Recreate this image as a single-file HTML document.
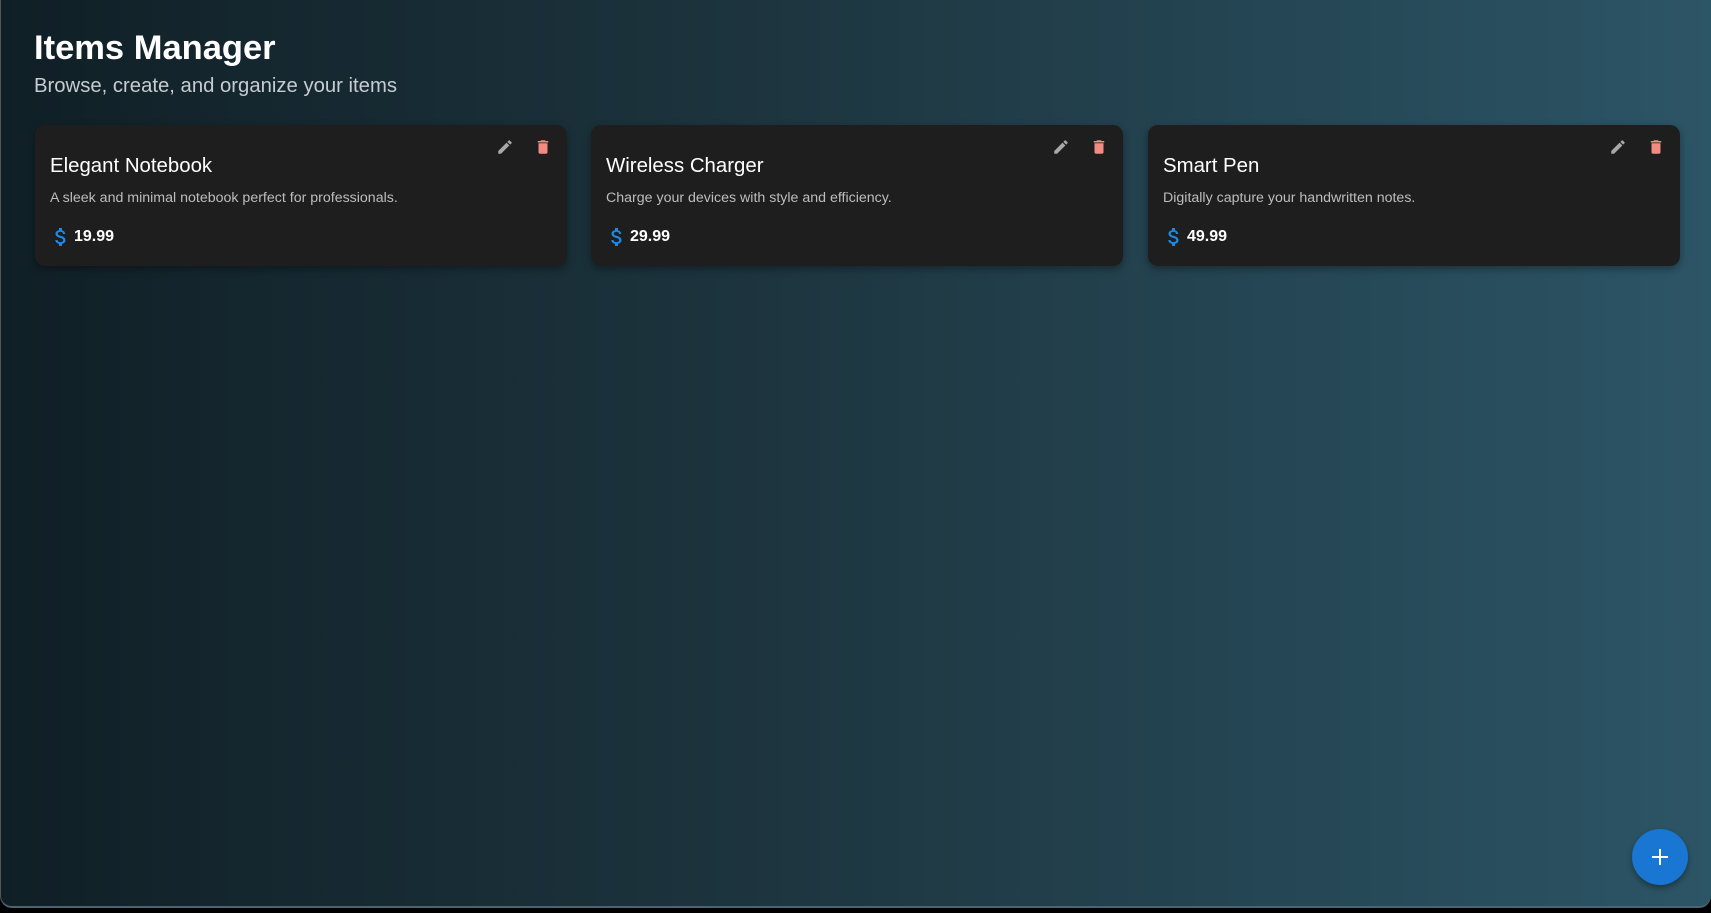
<!DOCTYPE html>
<html><head><meta charset="utf-8"><style>
*{margin:0;padding:0;box-sizing:border-box}
html,body{width:1711px;height:913px;background:#000;overflow:hidden;font-family:"Liberation Sans",sans-serif}
.main{position:absolute;left:0;top:0;width:1711px;height:908px;background:linear-gradient(90deg,#101f26 0%,#1d353f 45%,#2c5566 100%);border-left:1px solid #555;border-bottom:2px solid #4a6470;border-radius:0 0 12px 12px;}
h1{position:absolute;left:33px;top:29px;font-size:34.5px;font-weight:bold;color:#fff}
.sub{position:absolute;left:33px;top:75px;font-size:20.3px;color:#c6ccd0}
.card{position:absolute;top:125px;width:532px;height:141px;background:#1e1e1e;border-radius:10px;box-shadow:0 3px 8px rgba(0,0,0,.35)}
.card .t{position:absolute;left:15px;top:30px;font-size:20.4px;color:#fff}
.card .d{position:absolute;left:15px;top:65px;font-size:14.2px;color:#bdbdbd}
.card .p{position:absolute;left:20px;top:102px;display:flex;align-items:center;color:#fff;font-weight:bold;font-size:16px}
.card .p svg{margin-right:7px}
.ic{position:absolute;top:13px}
.fab{position:absolute;left:1631px;top:829px;width:56px;height:56px;border-radius:50%;background:#1976d2;box-shadow:0 3px 6px rgba(0,0,0,.35)}
.fab:before,.fab:after{content:"";position:absolute;background:#fff;left:20px;top:27px;width:16px;height:2px}
.fab:after{left:27px;top:20px;width:2px;height:16px}
</style></head><body>
<div class="main">
<h1>Items Manager</h1>
<div class="sub">Browse, create, and organize your items</div>

<div class="card" style="left:34px">
<svg class="ic" style="left:461px" width="18" height="18" viewBox="0 0 24 24"><path fill="#a8a8a8" d="M3 17.25V21h3.75L17.81 9.94l-3.75-3.75L3 17.25zM20.71 7.04a1 1 0 000-1.41l-2.34-2.34a1 1 0 00-1.41 0l-1.83 1.83 3.75 3.75 1.83-1.83z"/></svg>
<svg class="ic" style="left:499px" width="18" height="18" viewBox="0 0 24 24"><path fill="#f28b82" d="M6 19c0 1.1.9 2 2 2h8c1.1 0 2-.9 2-2V7H6v12zM19 4h-3.5l-1-1h-5l-1 1H5v2h14V4z"/></svg>
<div class="t">Elegant Notebook</div>
<div class="d">A sleek and minimal notebook perfect for professionals.</div>
<div class="p"><svg width="12" height="20" viewBox="6 2 12 20"><path fill="#1e88e5" d="M11.8 10.9c-2.27-.59-3-1.2-3-2.15 0-1.09 1.01-1.85 2.7-1.85 1.78 0 2.44.85 2.5 2.1h2.21c-.07-1.72-1.12-3.3-3.21-3.81V3h-3v2.16c-1.94.42-3.5 1.68-3.5 3.61 0 2.31 1.91 3.46 4.7 4.130 2.5.6 3 1.48 3 2.41 0 .69-.49 1.79-2.7 1.79-2.06 0-2.87-.92-2.98-2.1h-2.2c.12 2.19 1.76 3.42 3.68 3.83V21h3v-2.15c1.95-.37 3.5-1.5 3.5-3.55 0-2.84-2.43-3.81-4.7-4.4z"/></svg>19.99</div>
</div>

<div class="card" style="left:590px">
<svg class="ic" style="left:461px" width="18" height="18" viewBox="0 0 24 24"><path fill="#a8a8a8" d="M3 17.25V21h3.75L17.81 9.94l-3.75-3.75L3 17.25zM20.71 7.04a1 1 0 000-1.41l-2.34-2.34a1 1 0 00-1.41 0l-1.83 1.83 3.75 3.75 1.83-1.83z"/></svg>
<svg class="ic" style="left:499px" width="18" height="18" viewBox="0 0 24 24"><path fill="#f28b82" d="M6 19c0 1.1.9 2 2 2h8c1.1 0 2-.9 2-2V7H6v12zM19 4h-3.5l-1-1h-5l-1 1H5v2h14V4z"/></svg>
<div class="t">Wireless Charger</div>
<div class="d">Charge your devices with style and efficiency.</div>
<div class="p"><svg width="12" height="20" viewBox="6 2 12 20"><path fill="#1e88e5" d="M11.8 10.9c-2.27-.59-3-1.2-3-2.15 0-1.09 1.01-1.85 2.7-1.85 1.78 0 2.44.85 2.5 2.1h2.21c-.07-1.72-1.12-3.3-3.21-3.81V3h-3v2.16c-1.94.42-3.5 1.68-3.5 3.61 0 2.31 1.91 3.46 4.7 4.13 2.5.6 3 1.48 3 2.41 0 .69-.49 1.79-2.7 1.79-2.06 0-2.87-.92-2.98-2.1h-2.2c.12 2.19 1.76 3.42 3.68 3.83V21h3v-2.15c1.95-.37 3.5-1.5 3.5-3.55 0-2.84-2.43-3.81-4.7-4.4z"/></svg>29.99</div>
</div>

<div class="card" style="left:1147px">
<svg class="ic" style="left:461px" width="18" height="18" viewBox="0 0 24 24"><path fill="#a8a8a8" d="M3 17.25V21h3.75L17.81 9.94l-3.75-3.75L3 17.25zM20.71 7.04a1 1 0 000-1.41l-2.34-2.34a1 1 0 00-1.41 0l-1.83 1.83 3.75 3.75 1.83-1.83z"/></svg>
<svg class="ic" style="left:499px" width="18" height="18" viewBox="0 0 24 24"><path fill="#f28b82" d="M6 19c0 1.1.9 2 2 2h8c1.1 0 2-.9 2-2V7H6v12zM19 4h-3.5l-1-1h-5l-1 1H5v2h14V4z"/></svg>
<div class="t">Smart Pen</div>
<div class="d">Digitally capture your handwritten notes.</div>
<div class="p"><svg width="12" height="20" viewBox="6 2 12 20"><path fill="#1e88e5" d="M11.8 10.9c-2.27-.59-3-1.2-3-2.15 0-1.09 1.01-1.85 2.7-1.85 1.78 0 2.44.85 2.5 2.1h2.21c-.07-1.72-1.12-3.3-3.21-3.81V3h-3v2.16c-1.94.42-3.5 1.68-3.5 3.61 0 2.31 1.91 3.46 4.7 4.13 2.5.6 3 1.48 3 2.41 0 .69-.49 1.79-2.7 1.79-2.06 0-2.87-.92-2.98-2.1h-2.2c.12 2.19 1.76 3.42 3.68 3.83V21h3v-2.15c1.95-.37 3.5-1.5 3.5-3.55 0-2.84-2.43-3.81-4.7-4.4z"/></svg>49.99</div>
</div>

<div class="fab"></div>
</div>
</body></html>
